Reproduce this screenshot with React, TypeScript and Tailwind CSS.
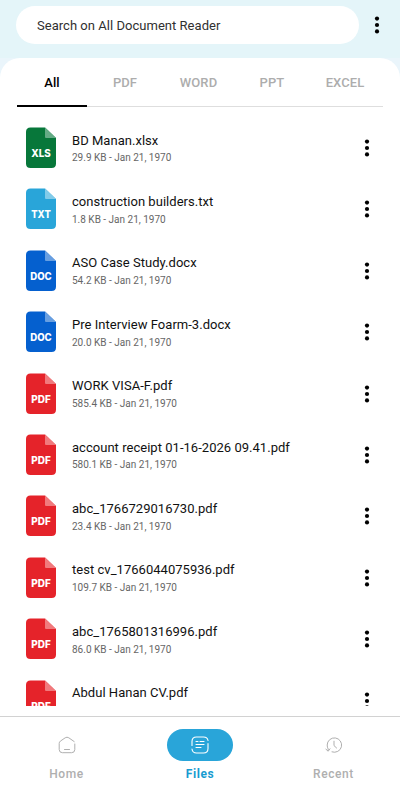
import React from 'react';

interface FileItem {
  name: string;
  size: string;
  type: 'XLS' | 'TXT' | 'DOC' | 'PDF';
}

const files: FileItem[] = [
  { name: 'BD Manan.xlsx', size: '29.9 KB', type: 'XLS' },
  { name: 'construction builders.txt', size: '1.8 KB', type: 'TXT' },
  { name: 'ASO Case Study.docx', size: '54.2 KB', type: 'DOC' },
  { name: 'Pre Interview Foarm-3.docx', size: '20.0 KB', type: 'DOC' },
  { name: 'WORK VISA-F.pdf', size: '585.4 KB', type: 'PDF' },
  { name: 'account receipt 01-16-2026 09.41.pdf', size: '580.1 KB', type: 'PDF' },
  { name: 'abc_1766729016730.pdf', size: '23.4 KB', type: 'PDF' },
  { name: 'test cv_1766044075936.pdf', size: '109.7 KB', type: 'PDF' },
  { name: 'abc_1765801316996.pdf', size: '86.0 KB', type: 'PDF' },
  { name: 'Abdul Hanan CV.pdf', size: '', type: 'PDF' },
];

const tabs = [
  { label: 'All', width: 'w-[70px]' },
  { label: 'PDF', width: 'w-[76px]' },
  { label: 'WORD', width: 'w-[71px]' },
  { label: 'PPT', width: 'w-[76px]' },
  { label: 'EXCEL', width: 'w-[70px]' },
];

const fileColors = {
  XLS: { fill: '#07773a', fold: '#64ab85' },
  TXT: { fill: '#29a5d9', fold: '#82cbe9' },
  DOC: { fill: '#0560cf', fold: '#689fe1' },
  PDF: { fill: '#e5232a', fold: '#f17a7d' },
};

function FileIcon({ type }: { type: FileItem['type'] }) {
  const { fill, fold } = fileColors[type];
  return (
    <svg className="block shrink-0" width="30" height="41" viewBox="0 0 30 41">
      <path
        d="M4.5 .5H19L30 11V36.5Q30 41 25.5 41H4.5Q0 41 0 36.5V5Q0 .5 4.5 .5Z"
        fill={fill}
      />
      <path d="M19 .5L30 11H20Q19 11 19 10Z" fill={fold} />
      <text
        x="15"
        y="30"
        textAnchor="middle"
        textLength={type === 'DOC' ? 21.5 : 19.5}
        lengthAdjust="spacingAndGlyphs"
        fill="#fff"
        fontFamily="Inter, sans-serif"
        fontSize="10"
        fontWeight="800"
      >
        {type}
      </text>
    </svg>
  );
}

function Dots() {
  return (
    <svg className="block shrink-0" width="6" height="18" viewBox="0 0 6 18">
      <circle cx="3" cy="2.6" r="2.1" />
      <circle cx="3" cy="9" r="2.1" />
      <circle cx="3" cy="15.4" r="2.1" />
    </svg>
  );
}

const iconProps = {
  width: 18,
  height: 18,
  viewBox: '0 0 18 18',
  fill: 'none',
  stroke: 'currentColor',
  strokeWidth: 1,
  strokeLinecap: 'round' as const,
  strokeLinejoin: 'round' as const,
};

function HomeIcon() {
  return (
    <svg {...iconProps}>
      <path d="M16.8 8V13.5Q16.8 16.7 13.6 16.7H4.4Q1.2 16.7 1.2 13.5V7.5Q1.2 6 2.4 5.1L7.2 1.8Q9 .6 10.8 1.8L16.2 5.6" />
      <path d="M6.5 13.5H11.5" />
    </svg>
  );
}

function FilesIcon() {
  return (
    <svg {...iconProps} strokeWidth={1.1}>
      <path d="M1 9.5V5.5Q1 1 5.5 1H12.5Q16.5 1 17 4.5M17 7.5V12.5Q17 17 12.5 17H5.5Q1.5 17 1 13" />
      <path d="M5 5.5H7M9 5.5H13M5 8.5H13M5 11.5H10" />
    </svg>
  );
}

function RecentIcon() {
  return (
    <svg {...iconProps}>
      <path d="M3.2 14V13Q2.2 11.4 2.2 9A7.2 7.2 0 1 1 7 15.9" />
      <path d="M.9 13.2L3.2 15.2L5 12.8M9 5.2V9.6L11.6 12" />
    </svg>
  );
}

export default function App() {
  return (
    <div className="flex h-[800px] w-[400px] flex-col overflow-hidden bg-[#eaf5fb] font-[Roboto,sans-serif] text-black">
      {/* Search */}
      <header className="flex h-[58px] shrink-0 items-start bg-[#e4f5f9] pt-1.5 pl-4">
        <div className="flex h-[38px] w-[343px] items-center rounded-full bg-white pt-px pl-[21px] text-[13px] tracking-[0.03px] text-[#303030]">
          Search on All Document Reader
        </div>
        <button className="mt-[10px] ml-[15px]">
          <Dots />
        </button>
      </header>

      <main className="flex min-h-0 flex-1 flex-col rounded-t-[20px] bg-white">
        {/* Tabs */}
        <nav className="mx-[17px] flex h-[49px] shrink-0 border-b border-[#dedede]">
          {tabs.map((tab, index) => (
            <button
              key={tab.label}
              className={`${tab.width} h-[49px] shrink-0 border-b-2 pt-[3px] text-[13px] font-medium tracking-[0.1px] ${
                index === 0 ? 'border-black text-black' : 'border-transparent text-[#adadad]'
              }`}
            >
              {tab.label}
            </button>
          ))}
        </nav>

        {/* Files */}
        <div className="mt-5 min-h-0 flex-1 overflow-hidden">
          {files.map((file) => (
            <div key={file.name} className="flex h-[61.4px] items-start pl-[26px]">
              <FileIcon type={file.type} />
              <div className="ml-4 w-[290px] pt-[4.6px]">
                <p className="text-[13px] leading-[18px] tracking-[0.03px] whitespace-nowrap text-[#111]">
                  {file.name}
                </p>
                {file.size && (
                  <p className="mt-[1.8px] text-[10px] leading-[14px] text-[#666]">
                    {file.size} - Jan 21, 1970
                  </p>
                )}
              </div>
              <button className="mt-3 ml-[1.5px]">
                <Dots />
              </button>
            </div>
          ))}
        </div>
      </main>

      {/* Bottom navigation */}
      <div className="h-[10px] shrink-0 bg-white" />
      <nav className="flex h-[84px] shrink-0 border-t border-[#d2d2d2] bg-white pt-3 text-[12px] font-medium tracking-[0.6px] text-[#afafaf]">
        <button className="flex w-[133px] flex-col items-center">
          <span className="flex h-8 items-center justify-center">
            <HomeIcon />
          </span>
          <span className="mt-[3.5px] leading-[18px]">Home</span>
        </button>
        <button className="flex w-[134px] flex-col items-center font-bold text-[#29a5d9]">
          <span className="flex h-8 w-[66px] items-center justify-center rounded-full bg-[#29a5d9] text-white">
            <FilesIcon />
          </span>
          <span className="mt-[3.5px] leading-[18px] tracking-[0.6px] text-[#189bd0]">Files</span>
        </button>
        <button className="flex w-[133px] flex-col items-center">
          <span className="flex h-8 items-center justify-center">
            <RecentIcon />
          </span>
          <span className="mt-[3.5px] leading-[18px]">Recent</span>
        </button>
      </nav>
    </div>
  );
}
